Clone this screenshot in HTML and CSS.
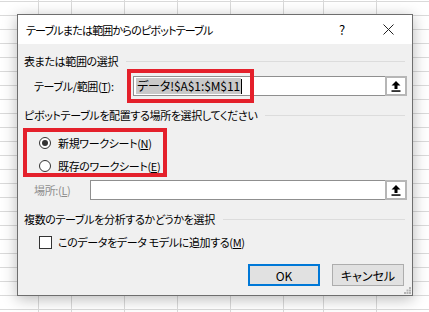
FILE: index.html
```html
<!DOCTYPE html>
<html lang="ja">
<head>
    <meta charset="UTF-8">
    <title>ピボットテーブル</title>
    <link rel="stylesheet" href="styles.css">
</head>
<body>
    <div class="desk">
        <div class="dialog">
            <div class="titlebar">
                <span class="title">テーブルまたは範囲からのピボットテーブル</span>
                <span class="help">?</span>
                <span class="close">
                    <svg width="11" height="11" viewBox="0 0 11 11"><path d="M0.5 0.5 L10.5 10.5 M10.5 0.5 L0.5 10.5" stroke="#222" stroke-width="1" fill="none"/></svg>
                </span>
            </div>
            <div class="content">
                <div class="group-title"><span>表または範囲の選択</span></div>
                <div class="row range-row">
                    <span class="label">テーブル/範囲(<u>T</u>):</span>
                    <div class="refedit range">
                        <span class="value"><span class="sel">データ!$A$1:$M$11</span><span class="caret"></span></span>
                        <span class="pick"><svg width="10" height="11" viewBox="0 0 10 11"><polygon points="5,0 9.5,4.5 6.5,4.5 6.5,8 3.5,8 3.5,4.5 0.5,4.5" fill="#000"/><rect x="0.5" y="9.3" width="9" height="1.5" fill="#000"/></svg></span>
                    </div>
                </div>

                <div class="group-title place"><span>ピボットテーブルを配置する場所を選択してください</span></div>
                <div class="row option first-option">
                    <span class="radio checked"></span>
                    <span class="text">新規ワークシート(<u>N</u>)</span>
                </div>
                <div class="row option">
                    <span class="radio"></span>
                    <span class="text">既存のワークシート(<u>E</u>)</span>
                </div>
                <div class="row location-row">
                    <span class="label disabled">場所:(<u>L</u>)</span>
                    <div class="refedit location">
                        <span class="value"></span>
                        <span class="pick"><svg width="10" height="11" viewBox="0 0 10 11"><polygon points="5,0 9.5,4.5 6.5,4.5 6.5,8 3.5,8 3.5,4.5 0.5,4.5" fill="#000"/><rect x="0.5" y="9.3" width="9" height="1.5" fill="#000"/></svg></span>
                    </div>
                </div>

                <div class="group-title multi"><span>複数のテーブルを分析するかどうかを選択</span></div>
                <div class="row option check-row">
                    <span class="checkbox"></span>
                    <span class="text">このデータをデータ&nbsp;モデルに追加する(<u>M</u>)</span>
                </div>

                <div class="buttons">
                    <button class="btn default">OK</button>
                    <button class="btn">キャンセル</button>
                </div>
            </div>

            <!-- 説明用の赤枠 -->
            <div class="mark mark-range"></div>
            <div class="mark mark-place"></div>
            <svg class="grip" width="7" height="7" viewBox="0 0 7 7"><g fill="#b4b4b4"><rect x="5" y="0" width="2" height="2"/><rect x="2.5" y="2.5" width="2" height="2"/><rect x="5" y="2.5" width="2" height="2"/><rect x="0" y="5" width="2" height="2"/><rect x="2.5" y="5" width="2" height="2"/><rect x="5" y="5" width="2" height="2"/></g></svg>
        </div>
    </div>
</body>
</html>
```

FILE: styles.css
```css
html,body,div,span,button{margin:0; padding:0;}
body{
    width:429px; height:312px; overflow:hidden;
    font-family:"Noto Sans CJK JP","Noto Sans",sans-serif; font-size:11px; color:#000;
    letter-spacing:-0.35px;
    font-feature-settings:"palt";
    background-color:#fff;
    background-image:
        linear-gradient(to right, transparent 38px, #dadada 38px 39px, transparent 39px 71px, #dadada 71px 72px, transparent 72px 124px, #dadada 124px 125px, transparent 125px 177px, #dadada 177px 178px, transparent 178px 230px, #dadada 230px 231px, transparent 231px 283px, #dadada 283px 284px, transparent 284px 323px, #dadada 323px 324px, transparent 324px 376px, #dadada 376px 377px, transparent 377px),
        repeating-linear-gradient(to bottom, #dadada 0 1px, transparent 1px 14px);
    background-position:0 0, 0 1px;
}
.desk{padding:14px 0 0 17px; height:312px; box-sizing:border-box;}

.dialog{
    position:relative;
    width:396px; height:282px; box-sizing:border-box;
    border:1px solid #6e6e6e; background:#f0f0f0;
    box-shadow:0 3px 14px rgba(0,0,0,.28);
    display:flex; flex-direction:column;
}

/* タイトルバー */
.titlebar{height:29px; background:#fff; display:flex; align-items:center; padding:0 14px 0 8px;}
.title{line-height:16px; letter-spacing:-0.8px;}
.help{margin-left:auto; width:20px; text-align:center; font-size:13px; letter-spacing:0;}
.close{margin-left:26px; width:20px; height:11px; display:flex; justify-content:center;}

.content{padding:9px 5px 0 6px; display:flex; flex-direction:column;}

/* グループの見出しと区切り線 */
.group-title{height:16px; display:flex; align-items:center; line-height:16px;}
.group-title::after{content:""; flex:1; height:1px; background:#dcdcdc; margin-left:8px; margin-right:2px;}
.group-title.place{margin-top:11px;}
.group-title.multi{margin-top:11px;}

.row{display:flex; align-items:center;}
.range-row{margin-top:7px; height:20px;}
.label{padding-left:10px; line-height:16px;}
.label.disabled{color:#8d8d8d;}
.range-row .label{width:99px;}
.location-row{margin-top:4px; height:20px;}
.location-row .label{width:56px;}

.refedit{flex:1; height:20px; box-sizing:border-box; border:1px solid #8f8f8f; border-right:none; background:#fff; display:flex;}
.value{flex:1; display:flex; align-items:center; padding-left:2px;}
.sel{background:#c9c9c9; line-height:16px; padding:0 1px; font-size:12px; letter-spacing:-0.1px;}
.caret{width:1px; height:15px; background:#000;}
.pick{width:22px; box-sizing:border-box; margin-top:-1px; height:20px; border:2px solid #b6b6b6; background:#fff; display:flex; align-items:center; justify-content:center;}

/* ラジオとチェック */
.option{height:20px;}
.first-option{margin-top:10px;}
.option + .option{margin-top:3px;}
.radio{width:12px; height:12px; box-sizing:border-box; border:1px solid #333; border-radius:50%; background:#fff; margin-left:15px; position:relative;}
.radio.checked::after{content:""; position:absolute; left:2px; top:2px; width:6px; height:6px; border-radius:50%; background:#333;}
.text{margin-left:7px; line-height:16px;}
.check-row{margin-top:5px;}
.checkbox{width:13px; height:13px; box-sizing:border-box; border:1px solid #333; background:#fff; margin-left:15px;}
.check-row .text{margin-left:6px;}

.buttons{margin-top:12px; display:flex; justify-content:flex-end; gap:12px; padding-right:3px;}
.btn{width:72px; height:22px; box-sizing:border-box; border:1px solid #adadad; background:#e1e1e1; font:inherit; font-size:12px; letter-spacing:0; color:#000;}
.btn.default{border:2px solid #0078d7;}

/* 赤枠 */
.mark{position:absolute; border:4px solid #e4202b; box-sizing:border-box;}
.mark-range{left:109px; top:54px; width:127px; height:34px;}
.mark-place{left:5px; top:113px; width:144px; height:49px;}

.grip{position:absolute; right:1px; bottom:1px;}
```
